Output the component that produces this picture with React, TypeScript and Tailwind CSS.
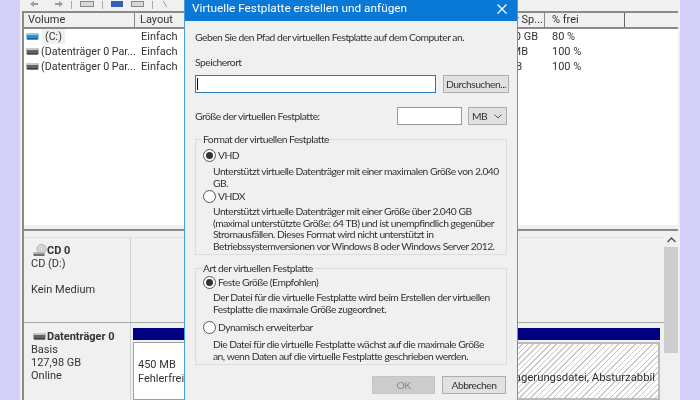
import React from "react";

function Drive({ blue }: { blue?: boolean }) {
  return (
    <svg width="13" height="7" viewBox="0 0 13 7" className="shrink-0">
      <rect x="0.5" y="0" width="12" height="6.5" rx="1" fill={blue ? "#2f8fc8" : "#5f6464"} />
      <rect x="0.5" y="0" width="12" height="2" fill={blue ? "#8fd0ee" : "#c4c8c8"} />
      <rect x="1" y="5" width="11" height="1.5" fill={blue ? "#1d5f8e" : "#3f4444"} />
    </svg>
  );
}

function CdIcon() {
  return (
    <svg width="14" height="13" viewBox="0 0 14 13" className="shrink-0">
      <circle cx="8.5" cy="5" r="4.5" fill="#d8d8d8" stroke="#a0a0a0" strokeWidth="0.8" />
      <circle cx="8.5" cy="5" r="1.3" fill="#ffffff" stroke="#999999" strokeWidth="0.5" />
      <rect x="0.5" y="8.5" width="11" height="3.5" fill="#6a6f6f" />
      <rect x="0.5" y="8.5" width="11" height="1.2" fill="#c4c8c8" />
    </svg>
  );
}

function Radio({ on }: { on?: boolean }) {
  return (
    <span className="w-[13px] h-[13px] rounded-full border border-[#555555] bg-white flex items-center justify-center shrink-0">
      {on && <span className="w-[7px] h-[7px] rounded-full bg-[#333333]" />}
    </span>
  );
}

function Row({ name, free, pad, pct, blue }: { name: string; free: string; pad: string; pct: string; blue?: boolean }) {
  return (
    <div className="h-[15px] flex items-center leading-[15px]">
      <div className="w-[111px] pl-[2px] flex items-center gap-[2px] whitespace-nowrap text-[10.7px]">
        <Drive blue={blue} />
        <span className={blue ? "bg-[#f0f0f0] px-[3px] ml-[1px]" : ""}>{name}</span>
      </div>
      <div className="w-[384px] pl-[6px]">Einfach</div>
      <div className={"w-[33px] flex justify-end whitespace-nowrap " + pad}>{free}</div>
      <div>{pct}</div>
    </div>
  );
}

export default function App() {
  return (
    <div
      className="relative w-[700px] h-[400px] overflow-hidden bg-[#d5d0f8] text-[11px] text-[#333333] blur-[0.35px]"
      style={{ fontFamily: 'Roboto, "Liberation Sans", sans-serif' }}
    >
      <div className="ml-[20px] w-[660px] h-[400px] bg-[#f0f0f0] pl-[2px] pr-[2px] flex flex-col">
        <div className="h-[11px] shrink-0 relative flex items-start gap-[8px] pl-[8px] pt-[1px]">
          <svg width="8" height="6" viewBox="0 0 8 6" fill="#9a9a9a"><path d="M0 3 4 0V2H8V4H4V6Z" /></svg>
          <svg width="8" height="6" viewBox="0 0 8 6" fill="#9a9a9a" className="ml-[9px]"><path d="M8 3 4 0V2H0V4H4V6Z" /></svg>
          <span className="w-[1px] h-[8px] bg-[#aaaaaa]" />
          <span className="w-[14px] h-[6px] bg-[#d8d8d8] border border-[#888888]" />
          <span className="w-[1px] h-[8px] bg-[#aaaaaa]" />
          <span className="w-[12px] h-[6px] bg-[#3360b0]" />
          <span className="w-[13px] h-[6px] bg-[#d8d8d8] border border-[#888888]" />
          <span className="w-[1px] h-[8px] bg-[#aaaaaa]" />
          <svg width="8" height="6" viewBox="0 0 8 6" fill="none" stroke="#9a9a9a"><path d="M2 0 6 6" /></svg>
          <svg width="10" height="6" viewBox="0 0 10 6" fill="none" stroke="#c03030" strokeWidth="1.5" className="ml-[12px]"><path d="M0 0 4 6M4 0 0 6M6 0 10 6M10 0 6 6" /></svg>
        </div>
        <div className="flex-1 min-h-0 border-l-[2px] border-[#8a8a8a] flex flex-col">
          <div className="h-[18px] shrink-0 flex border-y-[2px] border-[#8a8a8a] leading-[14px] whitespace-nowrap">
            <div className="w-[111px] pl-[4px] border-r border-[#8a8a8a]">Volume</div>
            <div className="w-[360px] pl-[5px]">Layout</div>
            <div className="w-[50px] border-r border-[#8a8a8a] text-right pr-[1px]">r Sp...</div>
            <div className="w-[80px] pl-[7px] border-r border-[#666666]">% frei</div>
          </div>
          <div className="h-[196px] shrink-0 bg-white">
            <Row name="(C:)" free="0 GB" pad="pr-[14px]" pct="80 %" blue />
            <Row name="(Datenträger 0 Par..." free="MB" pad="pr-[24px]" pct="100 %" />
            <Row name="(Datenträger 0 Par..." free="B" pad="pr-[30px]" pct="100 %" />
          </div>
          <div className="h-[6px] shrink-0 border-b-[2px] border-[#8a8a8a]" />
          <div className="flex-1 min-h-0 flex">
            <div className="flex-1 min-w-0 flex flex-col pt-[6px]">
              <div className="h-[86px] shrink-0 flex border-b border-[#a8a8a8] border-t border-t-[#e0e0e0]">
                <div className="w-[107px] border-r border-[#d0d0d0] pl-[7px] pt-[6px] leading-[13px]">
                  <div className="flex items-end font-bold gap-[0px] h-[13px] ml-[2px]">
                    <CdIcon />
                    <span>CD 0</span>
                  </div>
                  <div>CD (D:)</div>
                  <div className="mt-[13px]">Kein Medium</div>
                </div>
              </div>
              <div className="flex-1 min-h-0 flex">
                <div className="w-[107px] border-r border-[#d0d0d0] pl-[7px] pt-[7px] leading-[13px]">
                  <div className="flex items-center font-bold gap-[1px] h-[13px] ml-[2px]">
                    <Drive />
                    <span>Datenträger 0</span>
                  </div>
                  <div>Basis</div>
                  <div>127,98 GB</div>
                  <div>Online</div>
                </div>
                <div className="flex-1 min-w-0 flex flex-col pt-[5px] pl-[2px] pr-[4px]">
                  <div className="h-[12px] bg-[#000080] shrink-0" />
                  <div className="flex-1 min-h-0 flex mt-[2px]">
                    <div className="w-[60px] bg-white border-[1px] border-[#a0a0a0] pl-[4px] pt-[15px] leading-[14px] whitespace-nowrap">
                      450 MB<br />Fehlerfrei
                    </div>
                    <div
                      className="flex-1 min-w-0 border-[2px] border-[#bbbbbb] flex justify-end pr-[3px] pt-[27px] whitespace-nowrap leading-[14px] text-[11.3px]"
                      style={{ backgroundImage: "repeating-linear-gradient(135deg,#ffffff 0,#ffffff 3px,#c8c8c8 3px,#c8c8c8 4px)" }}
                    >
                      <span>lagerungsdatei, Absturzabbil</span>
                    </div>
                  </div>
                </div>
              </div>
            </div>
            <div className="w-[14px] shrink-0 flex flex-col pt-[2px]">
              <div className="h-[14px] shrink-0 flex items-center justify-center">
                <svg width="9" height="6" viewBox="0 0 9 6" fill="none" stroke="#555555" strokeWidth="1.5"><path d="M0.5 5 4.5 1 8.5 5" /></svg>
              </div>
              <div className="h-[106px] shrink-0 bg-[#cdcdcd]" />
            </div>
          </div>
        </div>
      </div>

      <div
        className="absolute left-[184px] top-0 w-[334px] h-[400px] bg-[#f0f0f0] border-x border-[#4a9bd8] flex flex-col leading-[13px] whitespace-nowrap text-[10.3px] tracking-[-0.5px]"
        style={{ fontFamily: 'Lato, "Liberation Sans", sans-serif' }}
      >
        <div
          className="h-[21px] bg-[#0a78d7] text-white text-[11.8px] tracking-normal flex items-center justify-between pl-[7px] pr-[10px] pb-[4px] shrink-0"
          style={{ fontFamily: 'Roboto, "Liberation Sans", sans-serif' }}
        >
          <span>Virtuelle Festplatte erstellen und anfügen</span>
          <svg width="10" height="10" viewBox="0 0 10 10" stroke="white" strokeWidth="1.2">
            <path d="M0.5 0.5 9.5 9.5M9.5 0.5 0.5 9.5" />
          </svg>
        </div>
        <div className="flex-1 min-h-0 flex flex-col pl-[10px]">
          <div className="mt-[10px]">Geben Sie den Pfad der virtuellen Festplatte auf dem Computer an.</div>
          <div className="mt-[12px]">Speicherort</div>
          <div className="mt-[6px] flex gap-[7px] h-[18px]">
            <div className="w-[241px] bg-white border border-[#2a7ab8] flex items-center pl-[1px]">
              <span className="w-[1px] h-[12px] bg-black" />
            </div>
            <div className="w-[66px] bg-[#e1e1e1] border border-[#adadad] flex items-center justify-center">Durchsuchen...</div>
          </div>
          <div className="mt-[14px] h-[18px] flex items-center">
            <span className="w-[202px]">Größe der virtuellen Festplatte:</span>
            <div className="w-[65px] h-[18px] bg-white border border-[#999999]" />
            <div className="ml-[6px] w-[39px] h-[18px] bg-[#e1e1e1] border border-[#adadad] flex items-center justify-between pl-[3px] pr-[4px]">
              <span>MB</span>
              <svg width="8" height="5" viewBox="0 0 8 5" fill="none" stroke="#555555"><path d="M0.5 0.5 4 4 7.5 0.5" /></svg>
            </div>
          </div>

          <div className="relative mt-[14px] w-[312px] h-[116px] border border-[#dcdcdc] pl-[17px]">
            <span className="absolute left-[6px] top-[-7px] bg-[#f0f0f0] px-[1px]">Format der virtuellen Festplatte</span>
            <div className="ml-[-10px] mt-[9px] flex items-center gap-[2px]"><Radio on /><span>VHD</span></div>
            <div className="mt-[3px] leading-[12px]">Unterstützt virtuelle Datenträger mit einer maximalen Größe von 2.040<br />GB.</div>
            <div className="ml-[-10px] mt-[1px] flex items-center gap-[2px]"><Radio /><span>VHDX</span></div>
            <div className="mt-[3px] leading-[11.7px]">
              Unterstützt virtuelle Datenträger mit einer Größe über 2.040 GB<br />
              (maximal unterstützte Größe: 64 TB) und ist unempfindlich gegenüber<br />
              Stromausfällen. Dieses Format wird nicht unterstützt in<br />
              Betriebssystemversionen vor Windows 8 oder Windows Server 2012.
            </div>
          </div>

          <div className="relative mt-[13px] w-[312px] h-[97px] border border-[#dcdcdc] pl-[17px]">
            <span className="absolute left-[6px] top-[-7px] bg-[#f0f0f0] px-[1px]">Art der virtuellen Festplatte</span>
            <div className="ml-[-10px] mt-[7px] flex items-center gap-[2px]"><Radio on /><span>Feste Größe (Empfohlen)</span></div>
            <div className="mt-[3px] leading-[11.5px]">
              Der Datei für die virtuelle Festplatte wird beim Erstellen der virtuellen<br />
              Festplatte die maximale Größe zugeordnet.
            </div>
            <div className="ml-[-10px] mt-[6px] flex items-center gap-[2px]"><Radio /><span>Dynamisch erweiterbar</span></div>
            <div className="mt-[5px] leading-[11.5px]">
              Die Datei für die virtuelle Festplatte wächst auf die maximale Größe<br />
              an, wenn Daten auf die virtuelle Festplatte geschrieben werden.
            </div>
          </div>

          <div className="mt-[11px] ml-[177px] flex gap-[7px]">
            <div className="w-[63px] h-[18px] bg-[#cccccc] border border-[#c4c4c4] text-[#888888] flex items-center justify-center">OK</div>
            <div className="w-[64px] h-[18px] bg-[#e1e1e1] border border-[#adadad] flex items-center justify-center">Abbrechen</div>
          </div>
        </div>
      </div>
    </div>
  );
}
